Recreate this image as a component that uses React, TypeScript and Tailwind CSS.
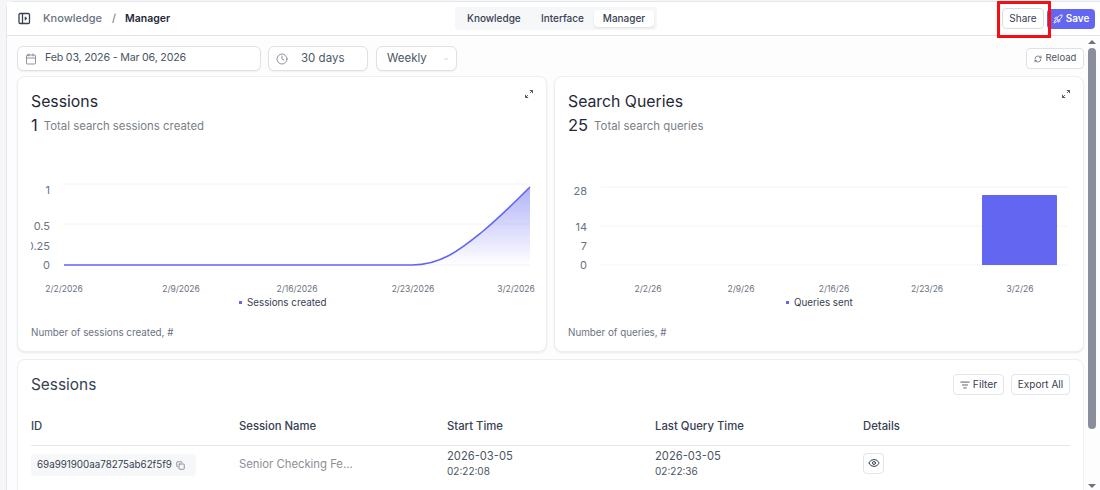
import { Calendar, Clock, Copy, Eye, ListFilter, RefreshCw, Rocket, ChevronDown } from 'lucide-react';

const font = { fontFamily: 'Inter, sans-serif' };

function ExpandIcon() {
  return (
    <svg width="8" height="8" viewBox="0 0 10 10" fill="none" stroke="#374151" strokeWidth="1.100">
      <path d="M6 0.6h3.400V4M9.200 0.800 6.400 3.600" />
      <path d="M4 9.400H0.600V6M0.800 9.200l2.800-2.800" />
    </svg>
  );
}

function SessionsChart() {
  const ticks = [
    ['2/2/2026', 47],
    ['2/9/2026', 164],
    ['2/16/2026', 280],
    ['2/23/2026', 396],
    ['3/2/2026', 499],
  ] as const;
  return (
    <svg width="528" height="170" viewBox="1 0 528 170" className="block">
      <defs>
        <linearGradient id="fade" x1="0" y1="0" x2="0" y2="1">
          <stop offset="0" stopColor="#6366f1" stopOpacity="0.5" />
          <stop offset="1" stopColor="#6366f1" stopOpacity="0" />
        </linearGradient>
        <clipPath id="clipLabel">
          <rect x="14" y="90" width="30" height="30" />
        </clipPath>
      </defs>
      {[44, 84, 125].map((y) => (
        <line key={y} x1="47" x2="513" y1={y} y2={y} stroke="#f1f2f4" />
      ))}
      <path d="M395 125C425 125 445 108 465 92C482 78 498 62 513 47V125Z" fill="url(#fade)" />
      <path d="M47 125H395C425 125 445 108 465 92C482 78 498 62 513 47" fill="none" stroke="#6366f1" strokeWidth="1.600" />
      <g fontSize="11" fill="#6b7280" textAnchor="end">
        <text x="33" y="54">1</text>
        <text x="33" y="90">0.5</text>
        <text x="33" y="110" clipPath="url(#clipLabel)">0.25</text>
        <text x="33" y="129">0</text>
      </g>
      <g fontSize="8.500" fill="#6b7280" textAnchor="middle">
        {ticks.map(([label, x]) => (
          <text key={label} x={x} y="152">{label}</text>
        ))}
      </g>
      <rect x="222" y="161" width="3" height="3" fill="#6366f1" />
      <text x="230" y="166" fontSize="9.800" fill="#374151">Sessions created</text>
    </svg>
  );
}

function QueriesChart() {
  const ticks = [
    ['2/2/26', 94],
    ['2/9/26', 187],
    ['2/16/26', 280],
    ['2/23/26', 373],
    ['3/2/26', 466],
  ] as const;
  return (
    <svg width="528" height="170" viewBox="1 0 528 170" className="block">
      {[47, 86, 125].map((y) => (
        <line key={y} x1="47" x2="513" y1={y} y2={y} stroke="#f3f4f6" />
      ))}
      <path d="M428 125V56a1 1 0 0 1 1-1h73a1 1 0 0 1 1 1v69Z" fill="#6366f1" />
      <g fontSize="11" fill="#6b7280" textAnchor="end">
        <text x="33" y="55">28</text>
        <text x="33" y="91">14</text>
        <text x="33" y="110">7</text>
        <text x="33" y="129">0</text>
      </g>
      <g fontSize="8.500" fill="#6b7280" textAnchor="middle">
        {ticks.map(([label, x]) => (
          <text key={label} x={x} y="152">{label}</text>
        ))}
      </g>
      <rect x="232" y="161" width="3" height="3" fill="#6366f1" />
      <text x="240" y="166" fontSize="9.800" fill="#374151">Queries sent</text>
    </svg>
  );
}

function ChartCard(props: { title: string; total: string; caption: string; footer: string; children: React.ReactNode }) {
  return (
    <div className="relative h-[276px] min-w-0 flex-1 rounded-lg border border-[#eceef1] bg-white shadow-[0_1px_2px_rgba(0,0,0,0.08)]">
      <div className="absolute right-[13px] top-[13px]"><ExpandIcon /></div>
      <div className="pl-[13px] pt-[14px]">
        <h2 className="text-[15.800px] leading-[21px] text-[#1f2937]">{props.title}</h2>
        <div className="mt-[3px] flex h-[21px] items-center gap-[6px]">
          <span className="text-[16.500px] text-[#1f2937]">{props.total}</span>
          <span className="mt-[2px] text-[11.400px] text-[#7b8088]">{props.caption}</span>
        </div>
      </div>
      <div className="mt-[4px]">{props.children}</div>
      <p className="mt-[16px] pl-[13px] text-[9.800px] leading-[14px] text-[#6b7280]">{props.footer}</p>
    </div>
  );
}

export default function App() {
  return (
    <div style={font} className="flex h-[490px] w-[1100px] overflow-hidden bg-[#f5f6f8] pt-px">
      <div className="w-[6px] shrink-0" />
      <div className="relative flex min-w-0 flex-1 flex-col rounded-tl-lg border-l border-t border-[#e4e6ea] bg-[#fdfdfe]">
        <header className="flex h-[34px] shrink-0 items-center border-b border-[#e2e4e9] bg-white pl-[11px] pr-[5px]">
          <div className="flex w-[437px] items-center">
            <svg width="13" height="13" viewBox="0 0 13 13" fill="none" stroke="#374151" strokeWidth="1.300">
              <rect x="1" y="1.500" width="10.500" height="10" rx="1.200" />
              <path d="M4.500 1.500v10" />
              <path d="M7 4.800l2 1.700-2 1.700z" fill="#374151" strokeWidth="0.600" />
            </svg>
            <span className="ml-[12px] text-[11px] font-medium text-[#6b7280]">Knowledge</span>
            <span className="ml-[10px] text-[11px] text-[#6b7280]">/</span>
            <span className="ml-[9px] text-[10.500px] font-semibold text-[#1f2937]">Manager</span>
          </div>
          <div className="flex h-[23px] w-[202px] items-center rounded bg-[#f6f7f9] pl-[12px] text-[10px] font-medium text-[#374151]">
            <span className="w-[74px]">Knowledge</span>
            <span className="w-[53px]">Interface</span>
            <span className="flex h-[17px] w-[60px] items-center justify-center rounded bg-white shadow-[0_1px_2px_rgba(0,0,0,0.1)]">Manager</span>
          </div>
          <div className="ml-auto flex items-center gap-[3px]">
            <button className="flex h-[21px] w-[42px] items-center justify-center rounded border border-[#d9dce1] bg-white text-[10px] text-[#374151]">Share</button>
            <button className="flex h-[20px] w-[48px] items-center justify-center gap-[3px] rounded bg-[#6366f1] text-[10px] font-semibold text-white">
              <Rocket size={10} />
              Save
            </button>
          </div>
          <div className="absolute right-[49px] top-[-1px] h-[37px] w-[54px] border-[3px] border-[#f50f13]" />
        </header>

        <div className="flex min-h-0 flex-1">
          <main className="min-w-0 flex-1 overflow-hidden pl-[10px] pr-[3px] pt-[10px]">
            <div className="flex items-center gap-[7px]">
              <div className="flex h-[25px] w-[244px] items-center rounded-md border border-[#dfe1e6] bg-white pl-[7px] text-[10.700px] tracking-[-0.2px] text-[#4b5563] shadow-[0_1px_1px_rgba(0,0,0,0.05)]">
                <Calendar size={12} className="text-[#6b7280]" strokeWidth={1.500} />
                <span className="ml-[8px]">Feb 03, 2026 - Mar 06, 2026</span>
              </div>
              <div className="flex h-[25px] w-[100px] items-center rounded-md border border-[#dfe1e6] bg-white pl-[7px] text-[11.500px] text-[#4b5563] shadow-[0_1px_1px_rgba(0,0,0,0.05)]">
                <Clock size={12} className="text-[#6b7280]" strokeWidth={1.500} />
                <span className="ml-[13px]">30 days</span>
              </div>
              <div className="ml-px flex h-[25px] w-[81px] items-center rounded-md border border-[#dfe1e6] bg-white pl-[10px] text-[11.500px] text-[#4b5563] shadow-[0_1px_1px_rgba(0,0,0,0.05)]">
                <span>Weekly</span>
                <ChevronDown size={6} className="ml-[16px] text-[#9ca3af]" />
              </div>
              <button className="ml-auto flex h-[21px] w-[58px] items-center justify-center gap-[4px] rounded border border-[#dfe1e6] bg-white text-[9.500px] text-[#4b5563]">
                <RefreshCw size={8} />
                Reload
              </button>
            </div>

            <div className="mt-[5px] flex gap-[7px]">
              <ChartCard title="Sessions" total="1" caption="Total search sessions created" footer="Number of sessions created, #">
                <SessionsChart />
              </ChartCard>
              <ChartCard title="Search Queries" total="25" caption="Total search queries" footer="Number of queries, #">
                <QueriesChart />
              </ChartCard>
            </div>

            <section className="mt-[7px] rounded-lg border border-[#eceef1] bg-white px-[13px] pb-[8px] pt-[14px]">
              <div className="flex h-[21px] items-center justify-between">
                <h2 className="text-[15.400px] text-[#374151]">Sessions</h2>
                <div className="flex gap-[7px]">
                  <button className="flex h-[21px] w-[51px] items-center justify-center gap-[3px] rounded border border-[#e2e4e9] bg-white text-[10.300px] text-[#374151]">
                    <ListFilter size={10} />
                    Filter
                  </button>
                  <button className="h-[21px] w-[59px] rounded border border-[#e2e4e9] bg-white text-[10px] text-[#374151]">Export All</button>
                </div>
              </div>
              <div className="mt-[20px] grid h-[31px] grid-cols-[208px_208px_208px_208px_1fr] items-start border-b border-[#e5e7eb] pt-[3px] text-[11.300px] font-medium leading-[16px] text-[#374151]">
                <span>ID</span>
                <span>Session Name</span>
                <span>Start Time</span>
                <span>Last Query Time</span>
                <span>Details</span>
              </div>
              <div className="grid grid-cols-[208px_208px_208px_208px_1fr] items-center pt-[2px] text-[#4b5563]">
                <div>
                  <span className="inline-flex h-[22px] w-[165px] items-center gap-[4px] rounded bg-[#f6f7f9] px-[6px] text-[9.800px] text-[#374151]">
                    69a991900aa78275ab62f5f9
                    <Copy size={9} className="text-[#6b7280]" />
                  </span>
                </div>
                <span className="mt-[2px] text-[11.300px] text-[#8b9098]">Senior Checking Fe...</span>
                <div className="text-[11.200px] leading-[16px]">
                  2026-03-05
                  <div className="text-[10px] leading-[14px]">02:22:08</div>
                </div>
                <div className="text-[11.200px] leading-[16px]">
                  2026-03-05
                  <div className="text-[10px] leading-[14px]">02:22:36</div>
                </div>
                <div>
                  <button className="flex h-[21px] w-[21px] items-center justify-center rounded border border-[#e2e4e9] bg-white text-[#374151]">
                    <Eye size={12} />
                  </button>
                </div>
              </div>
              <div className="mr-[11px] mt-[14px] flex justify-end gap-[8px]">
                <div className="h-[20px] w-[22px] rounded border border-[#e2e4e9]" />
                <div className="h-[20px] w-[22px] rounded border border-[#e2e4e9]" />
              </div>
            </section>
          </main>

          <div className="flex w-[13px] shrink-0 flex-col items-center bg-[#fdfdfe] pr-[3px] pt-[4px]">
            <div className="h-0 w-0 border-x-[4px] border-b-[4px] border-x-transparent border-b-[#6b7280]" />
            <div className="mt-[4px] h-[381px] w-[8px] rounded-sm bg-[#8a8e9c]" />
            <div className="mb-[2px] mt-auto h-0 w-0 border-x-[4px] border-t-[4px] border-x-transparent border-t-[#6b7280]" />
          </div>
        </div>
      </div>
    </div>
  );
}
